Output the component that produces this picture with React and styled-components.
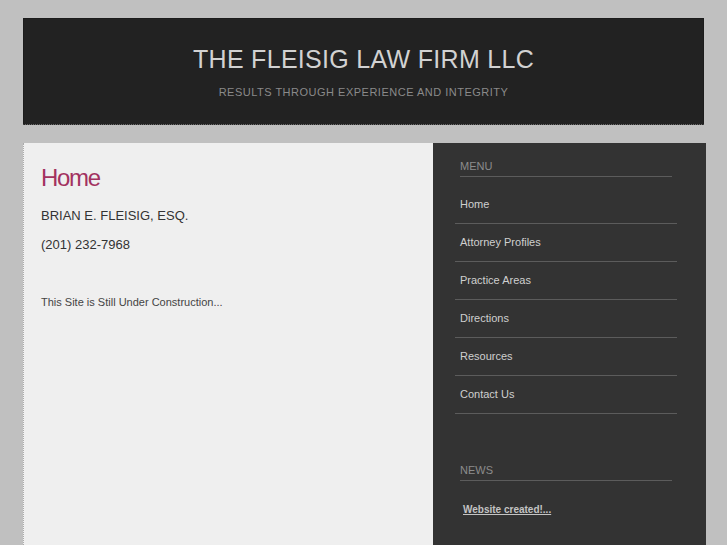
import React from 'react'
import styled, { createGlobalStyle } from 'styled-components'

const GlobalStyle = createGlobalStyle`
  html, body {
    margin: 0;
    padding: 0;
    background: #c0c0c0;
    font-family: "Liberation Sans", Arial, sans-serif;
  }
`;

const Page = styled.div`
  padding: 18px 0 0 23px;
  height: 527px;
  overflow: hidden;
`;

const Header = styled.header`
  width: 681px;
  height: 107px;
  box-sizing: border-box;
  background: #222;
  border: 1px solid #1c1c1c;
  border-bottom: 1px dotted #6a6a6a;
  padding-top: 25px;
  text-align: center;
`;

const Title = styled.h1`
  margin: 0;
  font-size: 25px;
  line-height: 30px;
  font-weight: normal;
  letter-spacing: 0.3px;
  color: #d2d2d2;
`;

const Tagline = styled.div`
  margin-top: 11px;
  font-size: 11px;
  line-height: 15px;
  letter-spacing: 0.5px;
  color: #8a8a8a;
`;

const Main = styled.div`
  margin-top: 18px;
  width: 683px;
  display: flex;
  min-height: 420px;
`;

const Content = styled.main`
  width: 410px;
  box-sizing: border-box;
  background: #efefef;
  border-left: 1px dotted #aaa;
  padding: 21px 18px 0 17px;
`;

const Heading = styled.h2`
  margin: 0;
  font-size: 24px;
  line-height: 28px;
  font-weight: normal;
  letter-spacing: -1.3px;
  color: #a3325f;
`;

const Para = styled.p`
  margin: ${p => p.$gap}px 0 0;
  font-size: ${p => p.$size}px;
  line-height: ${p => (p.$size > 12 ? 18 : 15)}px;
  color: ${p => (p.$size > 12 ? '#333' : '#444')};
`;

const Sidebar = styled.aside`
  width: 273px;
  box-sizing: border-box;
  background: #333;
  padding: 16px 29px 0 22px;
`;

const SideHeading = styled.div`
  margin: ${p => p.$top}px 5px 0;
  padding-bottom: 2px;
  border-bottom: 1px solid #5c5c5c;
  font-size: 11px;
  line-height: 15px;
  color: #8c8c8c;
`;

const MenuList = styled.ul`
  list-style: none;
  margin: 9px 0 0;
  padding: 0;
`;

const MenuItem = styled.li`
  padding: 11px 5px;
  line-height: 15px;
  font-size: 11px;
  color: #cfcfcf;
  border-bottom: 1px solid #5c5c5c;
`;

const NewsLink = styled.a`
  display: inline-block;
  margin: 21px 0 0 8px;
  font-size: 10px;
  line-height: 15px;
  font-weight: bold;
  color: #c4c4c4;
  text-decoration: underline;
`;

const menu = ['Home', 'Attorney Profiles', 'Practice Areas', 'Directions', 'Resources', 'Contact Us'];

export default function App() {
  return (
    <>
      <GlobalStyle />
      <Page>
        <Header>
          <Title>THE FLEISIG LAW FIRM LLC</Title>
          <Tagline>RESULTS THROUGH EXPERIENCE AND INTEGRITY</Tagline>
        </Header>
        <Main>
          <Content>
            <Heading>Home</Heading>
            <Para $size={13} $gap={15}>BRIAN E. FLEISIG, ESQ.</Para>
            <Para $size={13} $gap={11}>(201) 232-7968</Para>
            <Para $size={11} $gap={41}>This Site is Still Under Construction...</Para>
          </Content>
          <Sidebar>
            <SideHeading $top={0}>MENU</SideHeading>
            <MenuList>
              {menu.map(m => <MenuItem key={m}>{m}</MenuItem>)}
            </MenuList>
            <SideHeading $top={49}>NEWS</SideHeading>
            <NewsLink href="#">Website created!...</NewsLink>
          </Sidebar>
        </Main>
      </Page>
    </>
  )
}
